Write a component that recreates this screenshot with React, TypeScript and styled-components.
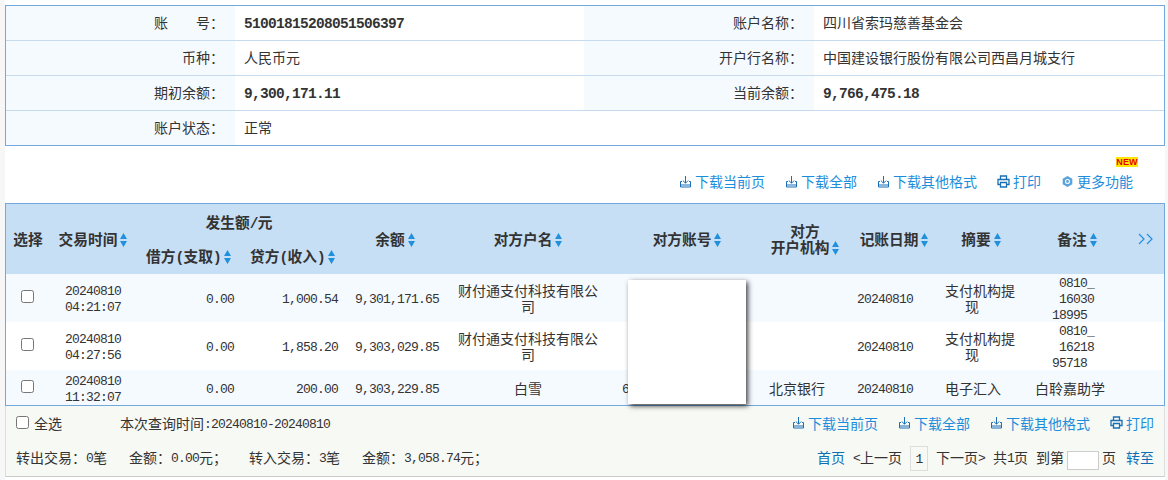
import React from 'react';
import styled, { createGlobalStyle } from 'styled-components';

const Global = createGlobalStyle`
  html, body { margin: 0; padding: 0; background: #f7f7f7; }
  body { font-family: "Noto Sans CJK SC", "Liberation Sans", sans-serif; font-size: 14px; color: #333; }
  input[type=checkbox] { margin: 0; display: block; }
`;

const Page = styled.div`
  width: 1160px;
  margin-left: 5px;
  padding-top: 5px;
  height: 475px;
  background: #fff;
`;

const Info = styled.div`
  display: grid;
  grid-template-columns: 229px 349px 230px 350px;
  border: 1px solid #72a8dc;
`;

const InfoLabel = styled.div<{ $last?: boolean }>`
  height: 34px;
  line-height: 32px;
  background: #f5faff;
  text-align: right;
  padding-right: 11px;
  white-space: pre;
  border-bottom: ${p => (p.$last ? 'none' : '1px solid #c6daed')};
`;

const InfoValue = styled.div<{ $last?: boolean }>`
  height: 34px;
  line-height: 32px;
  padding-left: 9px;
  border-bottom: ${p => (p.$last ? 'none' : '1px solid #c6daed')};
`;

const Num = styled.span<{ $bold?: boolean }>`
  font-family: "Liberation Mono", monospace;
  font-size: ${p => (p.$bold ? '14.5px' : '13px')};
  letter-spacing: ${p => (p.$bold ? '-0.7px' : '-0.8px')};
  font-weight: ${p => (p.$bold ? 700 : 400)};
  line-height: 8px;
  vertical-align: ${p => (p.$bold ? '0' : '1px')};
`;

const Toolbar = styled.div`
  height: 57px;
  box-sizing: border-box;
  display: flex;
  justify-content: flex-end;
  align-items: flex-end;
  gap: 20px;
  padding: 0 32px 14px 0;
`;

const FootLinks = styled.div`
  display: flex;
  gap: 20px;
`;

const LinkItem = styled.a`
  position: relative;
  display: flex;
  align-items: center;
  gap: 3px;
  height: 16px;
  line-height: 16px;
  color: #1c8ddb;
  white-space: nowrap;
`;

const NewBadge = styled.span`
  position: absolute;
  left: 55px;
  top: -16px;
  width: 22px;
  height: 10px;
  background: #ffe600;
  color: #e8000b;
  font: 700 9px/10px "Liberation Sans", sans-serif;
  text-align: center;
  letter-spacing: 0.2px;
`;

const TableWrap = styled.div`
  position: relative;
  border: 1px solid #72a8dc;
`;

const Grid = styled.table`
  width: 1158px;
  table-layout: fixed;
  border-collapse: collapse;
`;

const Head = styled.th<{ $h?: number; $pad?: string }>`
  box-sizing: border-box;
  background: #c6dff5;
  padding: ${p => p.$pad ?? '0'};
  height: ${p => p.$h ?? 36}px;
  font-weight: 700;
  font-size: 14.7px;
  line-height: 16px;
  color: #333;
  text-align: center;
  vertical-align: middle;
`;

const Row = styled.tr<{ $h: number; $tint?: boolean }>`
  height: ${p => p.$h}px;
  background: ${p => (p.$tint ? '#f5faff' : '#fff')};
`;

const Cell = styled.td<{ $align?: string; $pad?: string }>`
  padding: ${p => p.$pad ?? '0'};
  text-align: ${p => p.$align ?? 'center'};
  line-height: 16px;
  vertical-align: middle;
  word-break: break-all;
`;

const Line = styled.div<{ $indent?: number }>`
  padding-left: ${p => p.$indent ?? 0}px;
  white-space: nowrap;
`;

const Center = styled.div`
  display: flex;
  justify-content: center;
`;

const Masked = styled.div`
  position: absolute;
  left: 622px;
  top: 76px;
  width: 118px;
  height: 124px;
  background: #fff;
  box-shadow: 2px 2px 5px rgba(0, 0, 0, 0.75);
`;

const Footer = styled.div`
  height: 71px;
  box-sizing: border-box;
  display: flex;
  flex-direction: column;
  gap: 1px;
  background: #f7f9f5;
  border-left: 1px solid #ddd;
  border-right: 1px solid #ddd;
  border-bottom: 1px solid #ccc;
  padding: 0 10px;
`;

const FootRow = styled.div`
  height: 33px;
  display: flex;
  align-items: center;
  justify-content: space-between;
`;

const FootLeft = styled.div`
  display: flex;
  align-items: center;
`;

const SelectAll = styled.label`
  display: flex;
  align-items: center;
  gap: 5px;
  width: 104px;
`;

const Stat = styled.span`
  margin-right: 22px;
  white-space: pre;
`;

const Pager = styled.div`
  display: flex;
  align-items: center;
  white-space: pre;
`;

const PageLink = styled.a`
  color: #0e6fb5;
`;

const PageText = styled.span<{ $ml: number }>`
  margin-left: ${p => p.$ml}px;
`;

const PageBox = styled.span`
  box-sizing: border-box;
  width: 18px;
  height: 25px;
  margin: 3px 0 0 8px;
  border: 1px solid #ddd;
  line-height: 23px;
  text-align: center;
`;

const PageInput = styled.input`
  box-sizing: border-box;
  width: 32px;
  height: 19px;
  margin: 7px 3px 0;
  padding: 0;
  border: 1px solid #ccc;
  background: #fff;
`;

const DownloadIcon = () => (
  <svg width="13" height="13" viewBox="0 0 13 13" fill="none" stroke="#1b6fb5" strokeWidth="1">
    <path d="M6.500 1v7M3.800 5.500l2.700 2.700 2.700-2.700M3 6.500H1.500v5.500h10v-5.500H10M1.500 10h10" />
  </svg>
);

const PrintIcon = () => (
  <svg width="13" height="13" viewBox="0 0 13 13" fill="none" stroke="#1b6fb5" strokeWidth="1.300">
    <path d="M3.500 4V1h6v3M3 9.500H1V4.500h11v5h-2M3.500 7.500h6v4.500h-6z" />
  </svg>
);

const GearIcon = () => (
  <svg width="13" height="13" viewBox="0 0 13 13">
    <path d="M6.500 1l4.800 2.700v5.600L6.500 12 1.700 9.300V3.700z" fill="#5aa4de" />
    <circle cx="6.500" cy="6.500" r="2.500" fill="#fff" />
    <circle cx="6.500" cy="6.500" r="1.400" fill="#5aa4de" />
  </svg>
);

const SortIcon = styled(({ className }: { className?: string }) => (
  <svg className={className} width="7" height="14" viewBox="0 0 7 14" fill="#2190dc">
    <path d="M3.500 0L7 6H0zM0 8h7l-3.500 6z" />
  </svg>
))`
  display: inline-block;
  vertical-align: -2px;
  margin-left: 3px;
`;

const MoreIcon = () => (
  <svg width="16" height="12" viewBox="0 0 16 12" fill="none" stroke="#2190dc" strokeWidth="1.200">
    <path d="M1 1l5 5-5 5M9 1l5 5-5 5" />
  </svg>
);

const Sort = ({ children }: { children: React.ReactNode }) => (
  <>
    {children}
    <SortIcon />
  </>
);

const DL = ({ children }: { children: React.ReactNode }) => (
  <LinkItem>
    <DownloadIcon />
    {children}
  </LinkItem>
);

const Links = () => (
  <>
    <DL>下载当前页</DL>
    <DL>下载全部</DL>
    <DL>下载其他格式</DL>
    <LinkItem>
      <PrintIcon />
      打印
    </LinkItem>
  </>
);

const widths = [44, 86, 105, 103, 106, 156, 162, 78, 96, 78, 100, 44];

const rows = [
  { h: 48, tint: true, d: '20240810', t: '04:21:07', cr: '1,000.54', bal: '9,301,171.65', name: '财付通支付科技有限公司', note: ['0810_', '16030', '18995'] },
  { h: 48, tint: false, d: '20240810', t: '04:27:56', cr: '1,858.20', bal: '9,303,029.85', name: '财付通支付科技有限公司', note: ['0810_', '16218', '95718'] },
];

const checkPad = '0 2px 3px 0';

export default function App() {
  return (
    <Page>
      <Global />
      <Info>
        <InfoLabel>账　　号：</InfoLabel>
        <InfoValue><Num $bold>51001815208051506397</Num></InfoValue>
        <InfoLabel>账户名称：</InfoLabel>
        <InfoValue>四川省索玛慈善基金会</InfoValue>
        <InfoLabel>币种：</InfoLabel>
        <InfoValue>人民币元</InfoValue>
        <InfoLabel>开户行名称：</InfoLabel>
        <InfoValue>中国建设银行股份有限公司西昌月城支行</InfoValue>
        <InfoLabel>期初余额：</InfoLabel>
        <InfoValue><Num $bold>9,300,171.11</Num></InfoValue>
        <InfoLabel>当前余额：</InfoLabel>
        <InfoValue><Num $bold>9,766,475.18</Num></InfoValue>
        <InfoLabel $last>账户状态：</InfoLabel>
        <InfoValue $last>正常</InfoValue>
        <InfoValue $last />
        <InfoValue $last />
      </Info>
      <Toolbar>
        <Links />
        <LinkItem>
          <GearIcon />
          更多功能
          <NewBadge>NEW</NewBadge>
        </LinkItem>
      </Toolbar>
      <TableWrap>
        <Grid>
          <colgroup>
            {widths.map((w, i) => <col key={i} width={w} />)}
          </colgroup>
          <thead>
            <tr>
              <Head rowSpan={2}>选择</Head>
              <Head rowSpan={2}><Sort>交易时间</Sort></Head>
              <Head colSpan={2} $pad="0 2px 0 0">发生额<Num $bold>/</Num>元</Head>
              <Head rowSpan={2} $pad="0 4px 0 0"><Sort>余额</Sort></Head>
              <Head rowSpan={2}><Sort>对方户名</Sort></Head>
              <Head rowSpan={2}><Sort>对方账号</Sort></Head>
              <Head rowSpan={2} $pad="0 4px 0 0">对方<br /><Sort>开户机构</Sort></Head>
              <Head rowSpan={2}><Sort>记账日期</Sort></Head>
              <Head rowSpan={2}><Sort>摘要</Sort></Head>
              <Head rowSpan={2} $pad="0 0 0 14px"><Sort>备注</Sort></Head>
              <Head rowSpan={2} $pad="0 0 0 8px"><MoreIcon /></Head>
            </tr>
            <tr>
              <Head $h={34} $pad="0 0 2px 0"><Sort>借方<Num $bold>(</Num>支取<Num $bold>)</Num></Sort></Head>
              <Head $h={34} $pad="0 0 2px 0"><Sort>贷方<Num $bold>(</Num>收入<Num $bold>)</Num></Sort></Head>
            </tr>
          </thead>
          <tbody>
            {rows.map((r, i) => (
              <Row key={i} $h={r.h} $tint={r.tint}>
                <Cell $pad={checkPad}><Center><input type="checkbox" /></Center></Cell>
                <Cell><Num>{r.d}</Num><br /><Num>{r.t}</Num></Cell>
                <Cell $align="right" $pad="0 7px 0 0"><Num>0.00</Num></Cell>
                <Cell $align="right" $pad="0 6px 0 0"><Num>{r.cr}</Num></Cell>
                <Cell><Num>{r.bal}</Num></Cell>
                <Cell $pad="0 8px">{r.name}</Cell>
                <Cell />
                <Cell />
                <Cell $align="left" $pad="0 0 0 11px"><Num>20240810</Num></Cell>
                <Cell $align="left" $pad="0 0 0 3px">
                  <Line>支付机构提</Line>
                  <Line $indent={20}>现</Line>
                </Cell>
                <Cell $align="left" $pad="0 0 0 32px">
                  <Line $indent={7}><Num>{r.note[0]}</Num></Line>
                  <Line $indent={7}><Num>{r.note[1]}</Num></Line>
                  <Line><Num>{r.note[2]}</Num></Line>
                </Cell>
                <Cell />
              </Row>
            ))}
            <Row $h={35} $tint>
              <Cell $pad={checkPad}><Center><input type="checkbox" /></Center></Cell>
              <Cell><Num>20240810</Num><br /><Num>11:32:07</Num></Cell>
              <Cell $align="right" $pad="0 7px 0 0"><Num>0.00</Num></Cell>
              <Cell $align="right" $pad="0 6px 0 0"><Num>200.00</Num></Cell>
              <Cell><Num>9,303,229.85</Num></Cell>
              <Cell $pad="0 8px">白雪</Cell>
              <Cell $align="left" $pad="0 0 0 16px"><Num>6</Num></Cell>
              <Cell $align="left" $pad="0 0 0 1px"><Line>北京银行</Line></Cell>
              <Cell $align="left" $pad="0 0 0 11px"><Num>20240810</Num></Cell>
              <Cell $align="left" $pad="0 0 0 3px"><Line>电子汇入</Line></Cell>
              <Cell>白聆嘉助学</Cell>
              <Cell />
            </Row>
          </tbody>
        </Grid>
        <Masked />
      </TableWrap>
      <Footer>
        <FootRow>
          <FootLeft>
            <SelectAll><input type="checkbox" />全选</SelectAll>
            <span>本次查询时间<Num>:20240810-20240810</Num></span>
          </FootLeft>
          <FootLinks><Links /></FootLinks>
        </FootRow>
        <FootRow>
          <FootLeft>
            <Stat>转出交易：<Num>0</Num>笔</Stat>
            <Stat>金额：<Num>0.00</Num>元；</Stat>
            <Stat>转入交易：<Num>3</Num>笔</Stat>
            <Stat>金额：<Num>3,058.74</Num>元；</Stat>
          </FootLeft>
          <Pager>
            <PageLink>首页</PageLink>
            <PageText $ml={8}><Num>&lt;</Num>上一页</PageText>
            <PageBox><Num>1</Num></PageBox>
            <PageText $ml={8}>下一页<Num>&gt;</Num></PageText>
            <PageText $ml={8}>共<Num>1</Num>页</PageText>
            <PageText $ml={8}>到第</PageText>
            <PageInput />
            <span>页</span>
            <PageText $ml={10}><PageLink>转至</PageLink></PageText>
          </Pager>
        </FootRow>
      </Footer>
    </Page>
  );
}
